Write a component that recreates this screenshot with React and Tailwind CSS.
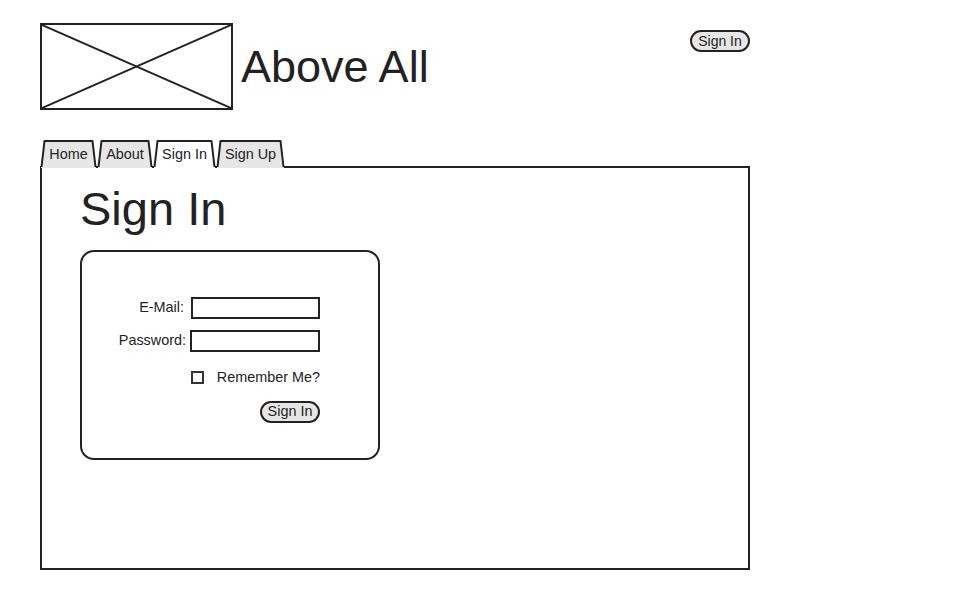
import React from "react";

function Tab({ label, w, active }) {
  return (
    <div className="relative h-[28px] flex items-start justify-center text-[14.4px] leading-none" style={{ width: w }}>
      <svg className="absolute inset-0" width={w} height="28" viewBox={`0 0 ${w} 28`}>
        <polygon
          points={`1,28 4,1 ${w - 4},1 ${w - 1},28`}
          fill={active ? "#ffffff" : "#e6e6e6"}
        />
        <polyline
          points={`1.5,27 4.5,1 ${w - 4.5},1 ${w - 1.5},27`}
          fill="none"
          stroke="#222"
          strokeWidth="2"
          strokeLinejoin="round"
        />
      </svg>
      <span className="relative pt-[7px]">{label}</span>
    </div>
  );
}

export default function App() {
  return (
    <div className="w-[960px] h-[600px] bg-white text-[#222] font-['Liberation_Sans',Arial,sans-serif]">
      {/* Header */}
      <div className="flex items-start pt-[23px] pl-[40px] w-[750px]">
        <div className="w-[193px] h-[87px] border-2 border-[#222]">
          <svg className="w-full h-full" viewBox="0 0 189 83" preserveAspectRatio="none">
            <line x1="0" y1="0" x2="189" y2="83" stroke="#222" strokeWidth="2" />
            <line x1="189" y1="0" x2="0" y2="83" stroke="#222" strokeWidth="2" />
          </svg>
        </div>
        <h1 className="ml-[8px] mt-[21px] text-[45px] leading-none">Above All</h1>
        <button className="ml-auto mt-[7px] h-[22px] w-[60px] rounded-full border-2 border-[#222] bg-[#e6e6e6] text-[14px] leading-none">
          Sign In
        </button>
      </div>

      {/* Tabs */}
      <div className="mt-[30px] ml-[40px] flex relative z-10 -mb-[2px]">
        <Tab label="Home" w={57} />
        <Tab label="About" w={56} />
        <Tab label="Sign In" w={63} active />
        <Tab label="Sign Up" w={69} />
      </div>

      {/* Panel */}
      <div className="ml-[40px] w-[710px] h-[404px] border-2 border-[#222] pl-[38px]">
        <h2 className="mt-[17px] text-[47px] leading-none">Sign In</h2>

        <div className="mt-[18px] w-[300px] h-[210px] rounded-[14px] border-2 border-[#222] pr-[58px] pt-[45px] flex flex-col items-end text-[14.4px]">
          <div className="flex items-center">
            <span>E-Mail:</span>
            <input className="ml-[7px] w-[129px] h-[22px] border-2 border-[#222] bg-white" />
          </div>
          <div className="flex items-center mt-[11px]">
            <span>Password:</span>
            <input type="password" className="ml-[4px] w-[130px] h-[22px] border-2 border-[#222] bg-white" />
          </div>
          <div className="flex items-center mt-[15px] w-[129px]">
            <span className="w-[13px] h-[13px] border-2 border-[#333]" />
            <span className="ml-auto">Remember Me?</span>
          </div>
          <button className="mt-[12px] h-[22px] w-[60px] rounded-full border-2 border-[#222] bg-[#e6e6e6] text-[14.4px] leading-none">
            Sign In
          </button>
        </div>
      </div>
    </div>
  );
}
